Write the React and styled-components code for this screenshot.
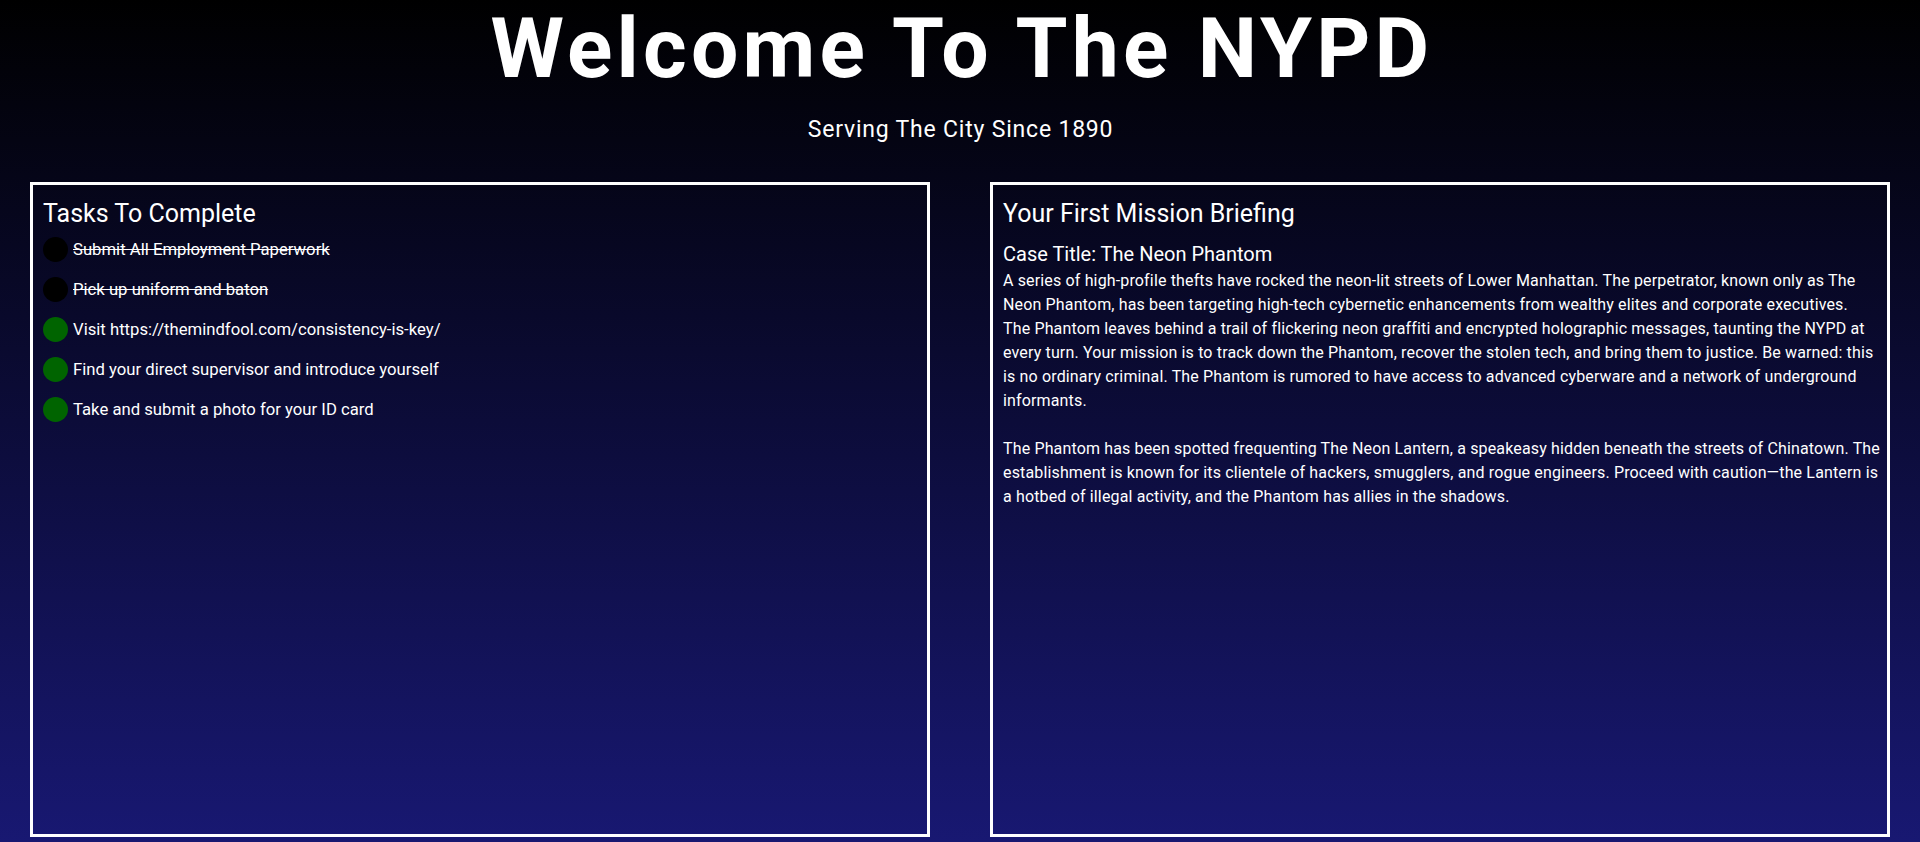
import styled, { createGlobalStyle } from "styled-components";

const GlobalStyle = createGlobalStyle`
  html, body {
    margin: 0;
    padding: 0;
  }
  body {
    font-family: Roboto, "Liberation Sans", sans-serif;
    color: #fff;
  }
`;

const tasks = [
  { text: "Submit All Employment Paperwork", done: true },
  { text: "Pick up uniform and baton", done: true },
  { text: "Visit https://themindfool.com/consistency-is-key/", done: false },
  { text: "Find your direct supervisor and introduce yourself", done: false },
  { text: "Take and submit a photo for your ID card", done: false },
];

// line breaks follow the original layout
const briefing = [
  [
    "A series of high-profile thefts have rocked the neon-lit streets of Lower Manhattan. The perpetrator, known only as The",
    "Neon Phantom, has been targeting high-tech cybernetic enhancements from wealthy elites and corporate executives.",
    "The Phantom leaves behind a trail of flickering neon graffiti and encrypted holographic messages, taunting the NYPD at",
    "every turn. Your mission is to track down the Phantom, recover the stolen tech, and bring them to justice. Be warned: this",
    "is no ordinary criminal. The Phantom is rumored to have access to advanced cyberware and a network of underground",
    "informants.",
  ],
  [
    "The Phantom has been spotted frequenting The Neon Lantern, a speakeasy hidden beneath the streets of Chinatown. The",
    "establishment is known for its clientele of hackers, smugglers, and rogue engineers. Proceed with caution—the Lantern is",
    "a hotbed of illegal activity, and the Phantom has allies in the shadows.",
  ],
];

function App() {
  return (
    <Page>
      <GlobalStyle />
      <Header>
        <Title>Welcome To The NYPD</Title>
        <Subtitle>Serving The City Since 1890</Subtitle>
      </Header>
      <Panels>
        <Panel>
          <PanelTitle>Tasks To Complete</PanelTitle>
          <TaskList>
            {tasks.map((t) => (
              <Task key={t.text}>
                <Dot $done={t.done} />
                <TaskText $done={t.done}>{t.text}</TaskText>
              </Task>
            ))}
          </TaskList>
        </Panel>
        <Panel>
          <PanelTitle>Your First Mission Briefing</PanelTitle>
          <CaseTitle>Case Title: The Neon Phantom</CaseTitle>
          <Briefing>
            {briefing.map((para, i) => (
              <span key={i}>
                {i > 0 && (
                  <>
                    <br />
                    <br />
                  </>
                )}
                {para.map((line, j) => (
                  <span key={j}>
                    {j > 0 && <br />}
                    {line}
                  </span>
                ))}
              </span>
            ))}
          </Briefing>
        </Panel>
      </Panels>
    </Page>
  );
}

export default App;

const Page = styled.div`
  min-height: 100vh;
  background: linear-gradient(to bottom, #000000, #181872);
  overflow: hidden;
`;

const Header = styled.header`
  text-align: center;
`;

const Title = styled.h1`
  margin: 0;
  padding-left: 4px;
  font-size: 84px;
  line-height: 98px;
  font-weight: 700;
  letter-spacing: 4.2px;
`;

const Subtitle = styled.p`
  margin: 18px 0 0;
  padding-left: 1px;
  font-size: 23px;
  line-height: 1.2;
  letter-spacing: 0.8px;
`;

const Panels = styled.main`
  display: flex;
  justify-content: space-around;
  margin-top: 38px;
`;

const Panel = styled.section`
  box-sizing: border-box;
  width: 900px;
  height: 655px;
  border: 3px solid #fff;
  padding: 14px 6px 14px 10px;
`;

const PanelTitle = styled.h2`
  margin: 0;
  font-size: 25px;
  font-weight: 400;
  line-height: 30px;
`;

const TaskList = styled.ul`
  list-style: none;
  margin: 8px 0 0;
  padding: 0;
`;

const Task = styled.li`
  display: flex;
  align-items: center;
  gap: 5px;
  height: 25px;
  margin-bottom: 15px;
`;

const Dot = styled.span`
  width: 25px;
  height: 25px;
  border-radius: 50%;
  background: ${(p) => (p.$done ? "#000" : "#006400")};
  flex-shrink: 0;
`;

const TaskText = styled.span`
  font-size: 16.7px;
  text-decoration: ${(p) => (p.$done ? "line-through" : "none")};
`;

const CaseTitle = styled.h3`
  margin: 13px 0 0;
  font-size: 20px;
  font-weight: 400;
  line-height: 24px;
`;

const Briefing = styled.p`
  margin: 3px 0 0;
  font-size: 16px;
  line-height: 24px;
  letter-spacing: 0.15px;
  white-space: nowrap;
`;
